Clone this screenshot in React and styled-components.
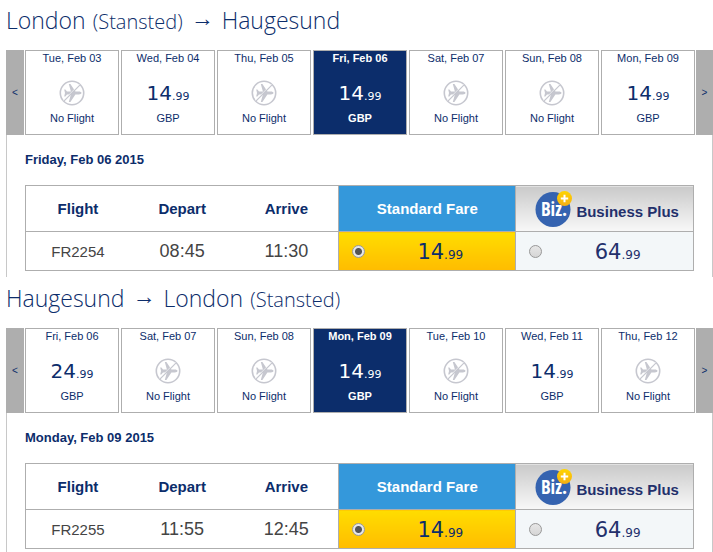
import React, { useState } from "react";
import styled, { createGlobalStyle } from "styled-components";

const GlobalStyle = createGlobalStyle`
  * {
    box-sizing: border-box;
  }

  body {
    margin: 0;
    background: #fff;
    color: #0c2d6b;
    font-family: "Liberation Sans", Arial, sans-serif;
    font-size: 11px;
  }
`;

const Page = styled.main`
  display: flex;
  flex-direction: column;
  gap: 1px;
  padding-left: 6px;
`;

const Title = styled.h2`
  display: flex;
  align-items: baseline;
  height: 50px;
  margin: 0;
  font-family: "Open Sans", sans-serif;
  font-size: 23px;
  font-weight: 300;
  line-height: 40px;
  white-space: pre;
`;

const Airport = styled.small`
  margin-left: 2px;
  font-size: 20px;
`;

const Arrow = styled.span`
  align-self: flex-start;
  margin: 0 8px;
  font-family: "Liberation Sans", Arial, sans-serif;
  font-weight: 400;
  line-height: 36px;
`;

const Strip = styled.div`
  display: flex;
  gap: 1px;
  height: 85px;
`;

const StripButton = styled.button`
  flex: 0 0 ${({ $width }) => $width};
  padding: 0;
  border: none;
  background: #aeaeae;
  color: #0c2d6b;
  font-family: inherit;
  font-size: 10px;
  cursor: pointer;
`;

const Days = styled.div`
  flex: 1;
  display: grid;
  grid-template-columns: repeat(7, 1fr);
  gap: 2px;
`;

const Day = styled.button`
  display: flex;
  flex-direction: column;
  align-items: center;
  padding: 0;
  border: 1px solid #aeaeae;
  background: ${({ $selected }) => ($selected ? "#0c2d6b" : "#fff")};
  color: ${({ $selected }) => ($selected ? "#fff" : "#0c2d6b")};
  font-family: inherit;
  font-size: 11px;
  font-weight: ${({ $selected }) => ($selected ? 700 : 400)};
  line-height: 14px;
  cursor: pointer;
`;

const DayValue = styled.span`
  display: flex;
  align-items: center;
  height: 26px;
  margin: 15px 0 5px;
`;

const Price = styled.span`
  padding-top: 4px;
  font-family: "DejaVu Sans", Verdana, sans-serif;
  font-size: ${({ $large }) => ($large ? "21px" : "20px")};
  font-weight: 400;
  line-height: 26px;
`;

const Pence = styled.span`
  font-size: ${({ $large }) => ($large ? "12px" : "11px")};
`;

const Details = styled.div`
  height: 142px;
  padding: 0 18px;
  border: 1px solid #c8c8c8;
  border-width: 0 1px;
`;

const FullDate = styled.h3`
  margin: 0;
  padding: 17px 0;
  font-size: 13px;
  line-height: 16px;
`;

const Fares = styled.table`
  width: 100%;
  table-layout: fixed;
  border: 1px solid #aeaeae;
  border-collapse: collapse;
`;

const HeadCell = styled.th`
  width: ${({ $width }) => $width};
  height: 46px;
  padding: 0;
  border-bottom: 1px solid #aeaeae;
  font-size: 15px;
`;

const StandardHead = styled(HeadCell)`
  border-left: 1px solid #aeaeae;
  background: #3498db;
  color: #fff;
`;

const BusinessHead = styled(HeadCell)`
  border-left: 1px solid #aeaeae;
  background: linear-gradient(#cacaca, #f8f8f8);
  color: #23306c;
`;

const Business = styled.div`
  display: flex;
  justify-content: center;
  align-items: center;
  gap: 3px;
  padding-left: 5px;
`;

const BusinessName = styled.span`
  padding-top: 6px;
`;

const Cell = styled.td`
  height: 39px;
  padding: 0;
  color: #444;
  font-size: ${({ $time }) => ($time ? "18px" : "15px")};
  text-align: center;
`;

const FareCell = styled(Cell)`
  border-left: 1px solid #aeaeae;
  background: ${({ $business }) =>
    $business ? "#f3f7f9" : "linear-gradient(#ffdd00, #ffbc00)"};
  color: ${({ $business }) => ($business ? "#23306c" : "#0c2d6b")};
`;

const FareLabel = styled.label`
  display: flex;
  align-items: center;
  padding-left: 13px;
  cursor: pointer;
`;

const Radio = styled.input`
  appearance: none;
  flex: none;
  width: 13px;
  height: 13px;
  margin: 0;
  border: 1px solid #999;
  border-radius: 50%;
  background: linear-gradient(#e6e6e6, #d6d6d6);

  &:checked {
    background: radial-gradient(circle, #555 0 3px, #e6e6e6 4px);
  }
`;

const FareAmount = styled.span`
  flex: 1;
  padding-top: 4px;
`;

function NoFlightIcon() {
  return (
    <svg width="26" height="26" viewBox="0 0 26 26" aria-hidden="true">
      <circle cx="13" cy="13" r="11.7" fill="none" stroke="#c6c7cf" strokeWidth="1.6" />
      <path
        fill="#c6c7cf"
        d="M22.500 13c0-.8-1.200-1.400-2.700-1.400h-3.400L11.400 4H9.800l2.100 7.600H8L6.400 9.600H5.200L6 13l-.8 3.400h1.200L8 14.400h3.900L9.800 22h1.600l5-7.600h3.400c1.500 0 2.700-.6 2.700-1.400z"
      />
      <path d="M4.300 20.500L20.500 4.300" stroke="#fff" strokeWidth="0.800" />
      <path d="M4.900 21.100L21.100 4.900" stroke="#c6c7cf" strokeWidth="1.200" />
    </svg>
  );
}

function BizLogo({ id }) {
  return (
    <svg width="38" height="38" viewBox="0 0 38 38" aria-hidden="true">
      <defs>
        <linearGradient id={id} x1="0" y1="0" x2="0" y2="1">
          <stop offset="0" stopColor="#ffd500" />
          <stop offset="1" stopColor="#f5ae14" />
        </linearGradient>
      </defs>
      <circle cx="18" cy="19.500" r="17.500" fill="#3563b0" />
      <text
        x="19"
        y="26"
        fill="#fff"
        fontFamily="Open Sans Condensed, Roboto Condensed, Lato, sans-serif"
        fontSize="19"
        fontWeight="700"
        textAnchor="middle"
      >
        Biz.
      </text>
      <circle cx="29.500" cy="8.500" r="7.500" fill={`url(#${id})`} />
      <path d="M29.500 4.800v7.400M25.800 8.500h7.400" stroke="#fff" strokeWidth="2" />
    </svg>
  );
}

function Amount({ value, large }) {
  const [pounds, pence] = value.split(".");
  return (
    <Price $large={large}>
      {pounds}
      <Pence $large={large}>.{pence}</Pence>
    </Price>
  );
}

function Place({ name, airport }) {
  return (
    <span>
      {name}
      {airport && <Airport> ({airport})</Airport>}
    </span>
  );
}

function Leg({ id, from, to, days, initial, fullDate, flight }) {
  const [selected, setSelected] = useState(initial);
  const [fare, setFare] = useState("standard");

  return (
    <section>
      <Title>
        <Place {...from} />
        <Arrow>→</Arrow>
        <Place {...to} />
      </Title>
      <Strip>
        <StripButton type="button" $width="18px" aria-label="Earlier dates">
          &lt;
        </StripButton>
        <Days>
          {days.map(([date, price], i) => (
            <Day
              key={date}
              type="button"
              $selected={i === selected}
              aria-pressed={i === selected}
              onClick={() => setSelected(i)}
            >
              <span>{date}</span>
              <DayValue>
                {price ? <Amount value={price} /> : <NoFlightIcon />}
              </DayValue>
              <span>{price ? "GBP" : "No Flight"}</span>
            </Day>
          ))}
        </Days>
        <StripButton type="button" $width="17px" aria-label="Later dates">
          &gt;
        </StripButton>
      </Strip>
      <Details>
        <FullDate>{fullDate}</FullDate>
        <Fares>
          <thead>
            <tr>
              <HeadCell>Flight</HeadCell>
              <HeadCell>Depart</HeadCell>
              <HeadCell>Arrive</HeadCell>
              <StandardHead $width="26.5%">Standard Fare</StandardHead>
              <BusinessHead $width="26.6%">
                <Business>
                  <BizLogo id={`${id}-plus`} />
                  <BusinessName>Business Plus</BusinessName>
                </Business>
              </BusinessHead>
            </tr>
          </thead>
          <tbody>
            <tr>
              <Cell>{flight.number}</Cell>
              <Cell $time>{flight.depart}</Cell>
              <Cell $time>{flight.arrive}</Cell>
              <FareCell>
                <FareLabel>
                  <Radio
                    type="radio"
                    name={id}
                    checked={fare === "standard"}
                    onChange={() => setFare("standard")}
                  />
                  <FareAmount>
                    <Amount value={flight.standard} large />
                  </FareAmount>
                </FareLabel>
              </FareCell>
              <FareCell $business>
                <FareLabel>
                  <Radio
                    type="radio"
                    name={id}
                    checked={fare === "business"}
                    onChange={() => setFare("business")}
                  />
                  <FareAmount>
                    <Amount value={flight.business} large />
                  </FareAmount>
                </FareLabel>
              </FareCell>
            </tr>
          </tbody>
        </Fares>
      </Details>
    </section>
  );
}

const london = { name: "London", airport: "Stansted" };
const haugesund = { name: "Haugesund" };

const outboundDays = [
  ["Tue, Feb 03", null],
  ["Wed, Feb 04", "14.99"],
  ["Thu, Feb 05", null],
  ["Fri, Feb 06", "14.99"],
  ["Sat, Feb 07", null],
  ["Sun, Feb 08", null],
  ["Mon, Feb 09", "14.99"],
];

const returnDays = [
  ["Fri, Feb 06", "24.99"],
  ["Sat, Feb 07", null],
  ["Sun, Feb 08", null],
  ["Mon, Feb 09", "14.99"],
  ["Tue, Feb 10", null],
  ["Wed, Feb 11", "14.99"],
  ["Thu, Feb 12", null],
];

function App() {
  return (
    <>
      <GlobalStyle />
      <Page>
        <Leg
          id="outbound"
          from={london}
          to={haugesund}
          days={outboundDays}
          initial={3}
          fullDate="Friday, Feb 06 2015"
          flight={{
            number: "FR2254",
            depart: "08:45",
            arrive: "11:30",
            standard: "14.99",
            business: "64.99",
          }}
        />
        <Leg
          id="return"
          from={haugesund}
          to={london}
          days={returnDays}
          initial={3}
          fullDate="Monday, Feb 09 2015"
          flight={{
            number: "FR2255",
            depart: "11:55",
            arrive: "12:45",
            standard: "14.99",
            business: "64.99",
          }}
        />
      </Page>
    </>
  );
}

export default App;
